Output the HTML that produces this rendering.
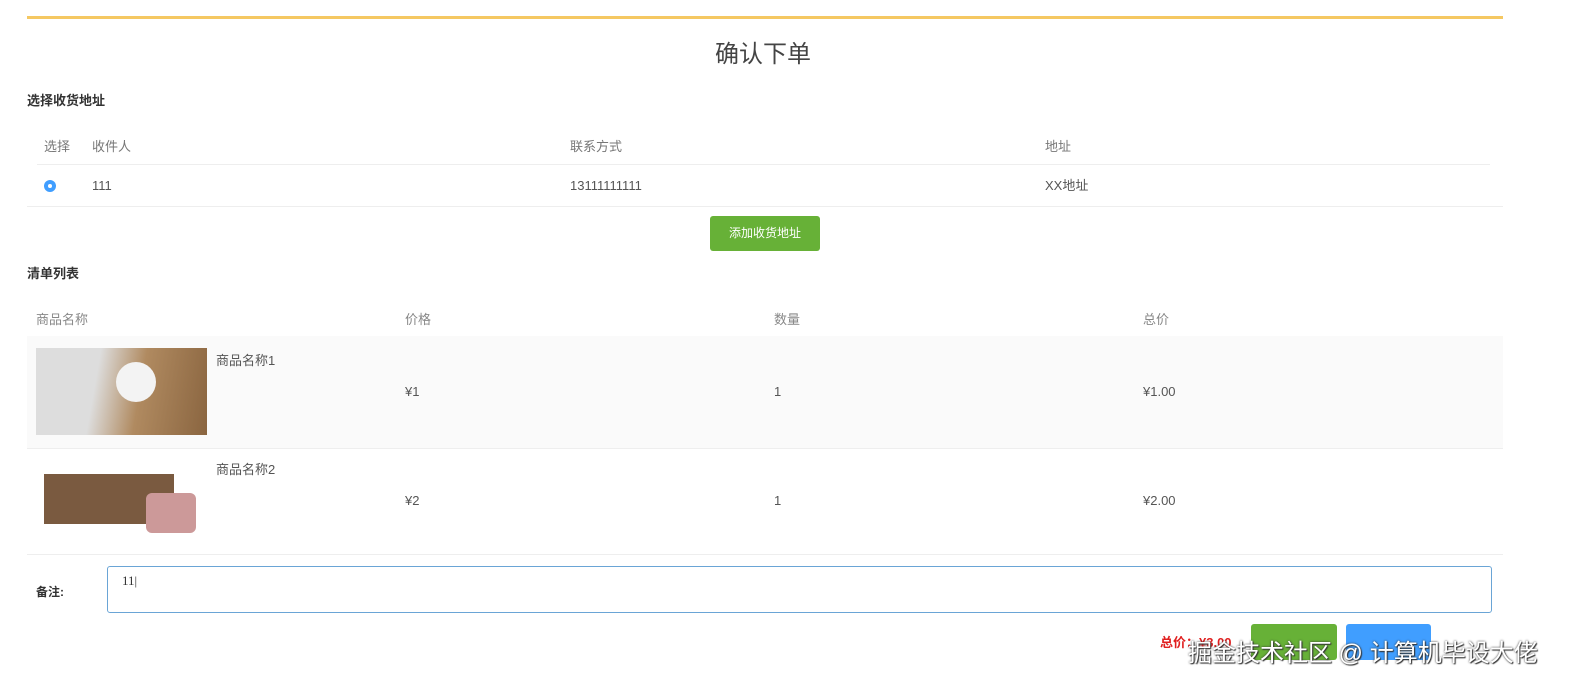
<!DOCTYPE html>
<html><head><meta charset="utf-8"><style>
body{margin:0;width:1574px;height:686px;background:#fff;font-family:"Liberation Sans","Noto Sans CJK SC",sans-serif;color:#555;position:relative;overflow:hidden;font-size:13px}
.a{position:absolute;white-space:nowrap}
.line{position:absolute;background:#eee;height:1px}
.b{font-weight:bold;color:#333}
</style></head><body>
<div class="a" style="left:27px;top:16px;width:1476px;height:3px;background:#f5c862"></div>
<div class="a" style="left:715px;top:34px;font-size:24px;color:#444">确认下单</div>
<div class="a b" style="left:27px;top:90px">选择收货地址</div>
<div class="a" style="left:44px;top:136px;color:#777">选择</div>
<div class="a" style="left:92px;top:136px;color:#777">收件人</div>
<div class="a" style="left:570px;top:136px;color:#777">联系方式</div>
<div class="a" style="left:1045px;top:136px;color:#777">地址</div>
<div class="line" style="left:37px;top:164px;width:1453px"></div>
<div class="a" style="left:44px;top:180px;width:12px;height:12px;border-radius:50%;background:#409eff"><div style="margin:4px;width:4px;height:4px;border-radius:50%;background:#fff"></div></div>
<div class="a" style="left:92px;top:178px">111</div>
<div class="a" style="left:570px;top:178px">13111111111</div>
<div class="a" style="left:1045px;top:178px;line-height:16px">XX地址</div>
<div class="line" style="left:27px;top:206px;width:1476px"></div>
<div class="a" style="left:710px;top:216px;width:110px;height:35px;background:#67b137;border-radius:3px;color:#fff;text-align:center;line-height:35px;font-size:12px">添加收货地址</div>
<div class="a b" style="left:27px;top:263px">清单列表</div>
<div class="a" style="left:36px;top:309px;color:#888">商品名称</div>
<div class="a" style="left:405px;top:309px;color:#888">价格</div>
<div class="a" style="left:774px;top:309px;color:#888">数量</div>
<div class="a" style="left:1143px;top:309px;color:#888">总价</div>
<div class="a" style="left:27px;top:336px;width:1476px;height:112px;background:#fafafa"></div>
<div class="a" style="left:36px;top:348px;width:171px;height:87px;background:linear-gradient(100deg,#ddd 0 35%,#b08a60 60%,#8a6540)"><div style="position:absolute;left:80px;top:14px;width:40px;height:40px;border-radius:50%;background:#f3f3f3"></div></div>
<div class="a" style="left:216px;top:350px">商品名称1</div>
<div class="a" style="left:405px;top:384px">¥1</div>
<div class="a" style="left:774px;top:384px">1</div>
<div class="a" style="left:1143px;top:384px">¥1.00</div>
<div class="line" style="left:27px;top:448px;width:1476px"></div>
<div class="a" style="left:36px;top:458px;width:171px;height:82px;background:#fff"><div style="position:absolute;left:8px;top:16px;width:130px;height:50px;background:#7a5a40"></div><div style="position:absolute;left:110px;top:35px;width:50px;height:40px;background:#c99;border-radius:6px"></div></div>
<div class="a" style="left:216px;top:459px">商品名称2</div>
<div class="a" style="left:405px;top:493px">¥2</div>
<div class="a" style="left:774px;top:493px">1</div>
<div class="a" style="left:1143px;top:493px">¥2.00</div>
<div class="line" style="left:27px;top:554px;width:1476px"></div>
<div class="a b" style="left:36px;top:583px;font-size:12px">备注:</div>
<div class="a" style="left:107px;top:566px;width:1385px;height:47px;border:1px solid #6aa5d6;border-radius:3px;font-family:'Liberation Serif',serif;padding:6px 14px;box-sizing:border-box;color:#333">11|</div>
<div class="a" style="left:1160px;top:632px;color:#e02020;font-weight:bold;font-size:13px">总价：¥3.00</div>
<div class="a" style="left:1251px;top:624px;width:86px;height:36px;background:#67b137;border-radius:3px"></div>
<div class="a" style="left:1346px;top:624px;width:85px;height:36px;background:#409eff;border-radius:3px"></div>
<div class="a" style="left:1188px;top:633px;font-size:24px;color:#fff;text-shadow:0 0 2px #333,1px 1px 1px #333">掘金技术社区 @ 计算机毕设大佬</div>
</body></html>
